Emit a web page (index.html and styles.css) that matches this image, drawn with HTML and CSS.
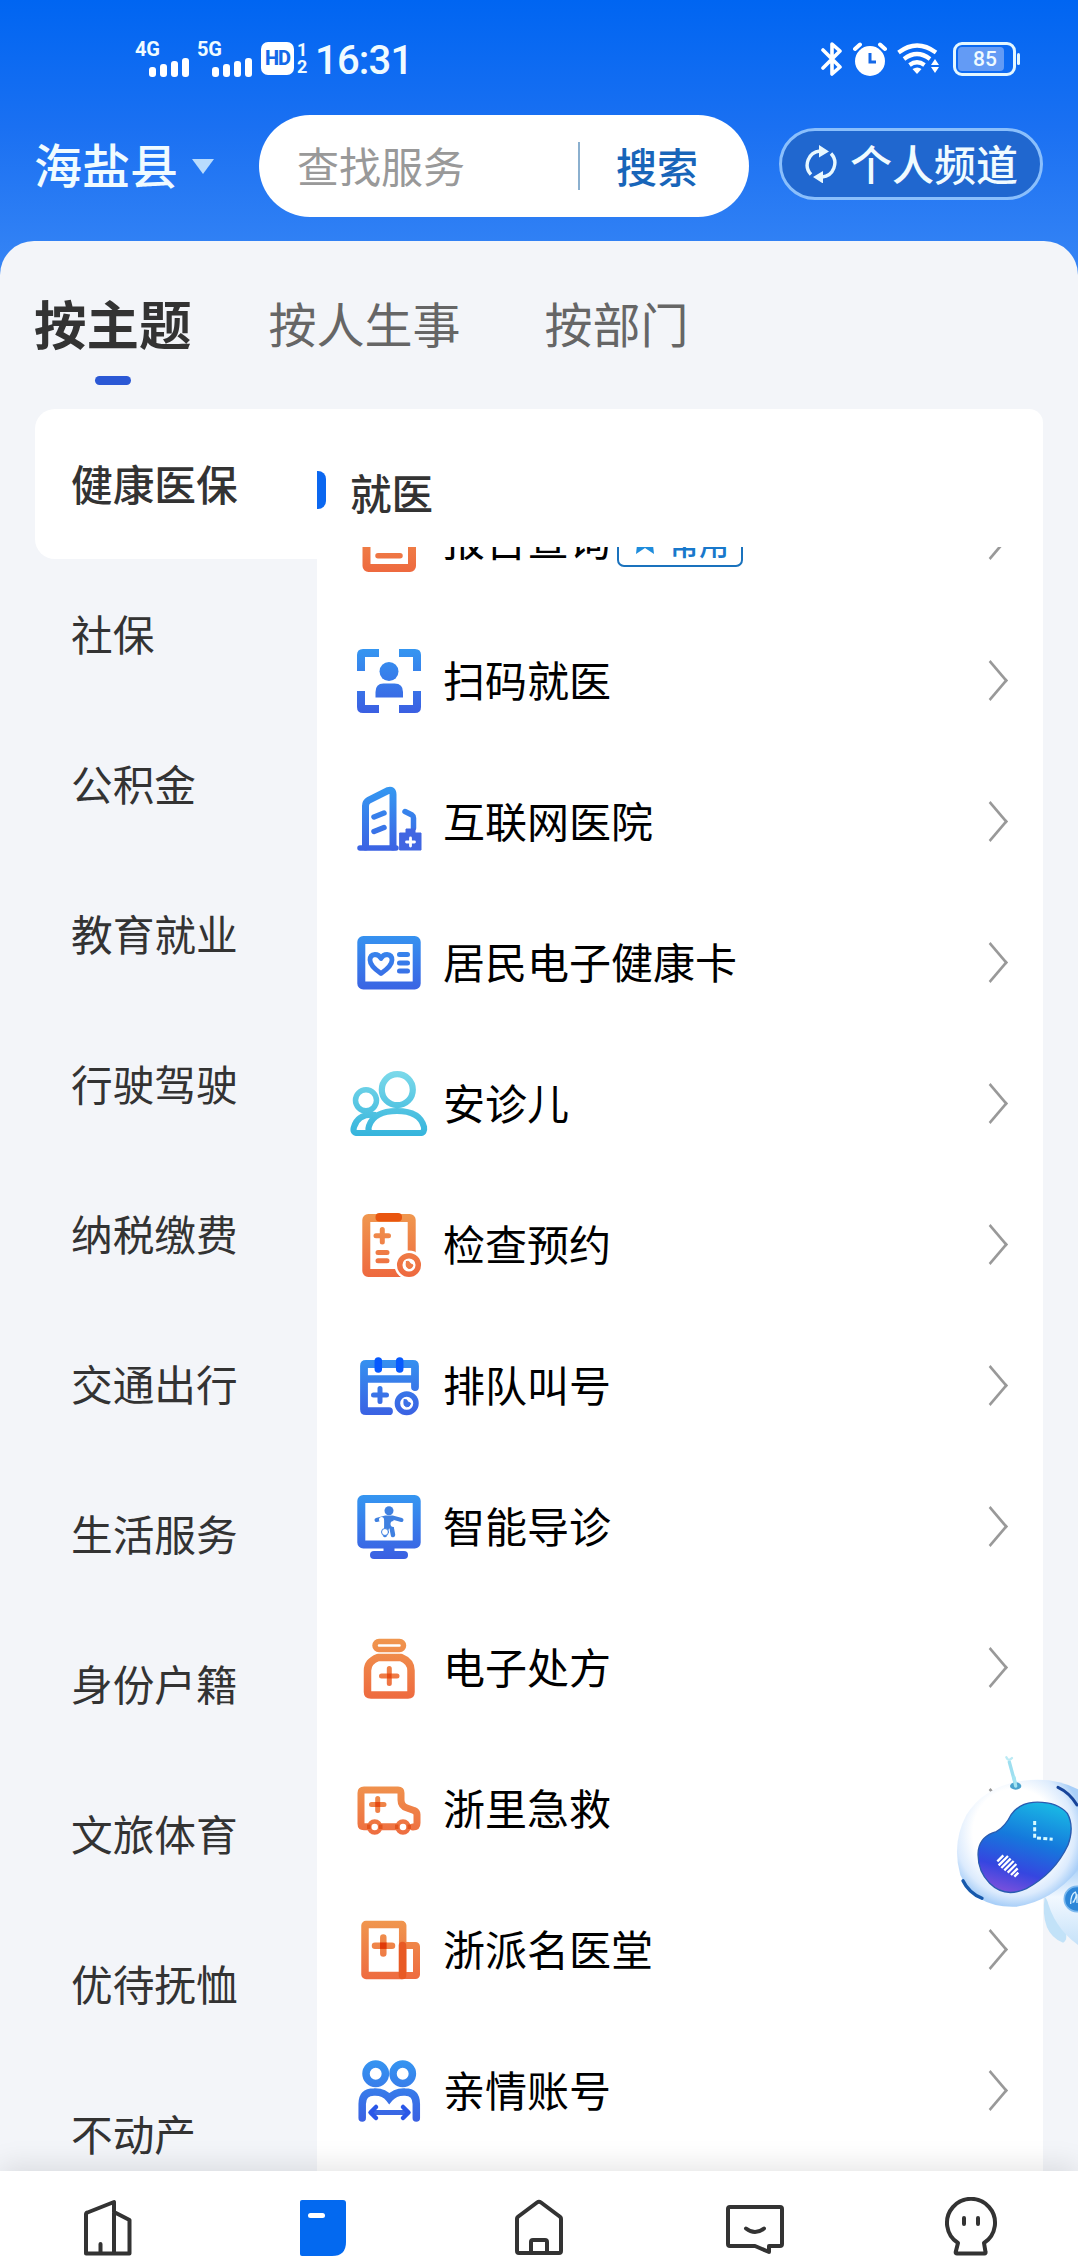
FILE: index.html
```html
<!DOCTYPE html>
<html lang="zh-CN">
<head>
<meta charset="utf-8">
<title>办事服务</title>
<link rel="stylesheet" href="styles.css">
</head>
<body>
<svg class="defs" width="0" height="0" aria-hidden="true">
  <defs>
    <linearGradient id="blue" gradientUnits="userSpaceOnUse" x1="0" y1="8" x2="0" y2="72"><stop offset="0" stop-color="#3596f1"/><stop offset="1" stop-color="#3b5fe2"/></linearGradient>
    <linearGradient id="orange" gradientUnits="userSpaceOnUse" x1="0" y1="8" x2="0" y2="72"><stop offset="0" stop-color="#f0984f"/><stop offset="1" stop-color="#ee693f"/></linearGradient>
    <linearGradient id="cyan" gradientUnits="userSpaceOnUse" x1="0" y1="8" x2="0" y2="72"><stop offset="0" stop-color="#7bd9ea"/><stop offset="1" stop-color="#35b4dc"/></linearGradient>
  </defs>
</svg>
<div class="app">
  <header class="header">
    <div class="status">
      <div class="status-left">
        <div class="signal"><span class="net">4G</span><svg width="40" height="19" viewBox="0 0 40 19"><g fill="#fff"><rect y="9" width="7" height="10" rx="3"/><rect x="11" y="6" width="7" height="13" rx="3"/><rect x="22" y="3" width="7" height="16" rx="3"/><rect x="33" width="7" height="19" rx="3"/></g></svg></div>
        <div class="signal"><span class="net">5G</span><svg width="40" height="19" viewBox="0 0 40 19"><g fill="#fff"><rect y="9" width="7" height="10" rx="3"/><rect x="11" y="6" width="7" height="13" rx="3"/><rect x="22" y="3" width="7" height="16" rx="3"/><rect x="33" width="7" height="19" rx="3"/></g></svg></div>
        <span class="hd">HD</span>
        <span class="sims"><span>1</span><span>2</span></span>
        <span class="clock">16:31</span>
      </div>
      <div class="status-right">
        <svg width="22" height="34" viewBox="0 0 22 34" fill="none" stroke="#fff" stroke-width="3.600" stroke-linejoin="round" stroke-linecap="round"><path d="M2 8l17 17-8 7V2l8 7L2 26"/></svg>
        <svg width="34" height="34" viewBox="0 0 34 34"><circle cx="17" cy="19" r="15" fill="#fff"/><path d="M2 7l5-4.500M32 7l-5-4.500" stroke="#fff" stroke-width="4" stroke-linecap="round"/><path d="M17 11v9h6" stroke="#1468e8" stroke-width="3" fill="none"/></svg>
        <svg width="44" height="32" viewBox="0 0 44 32" fill="none" stroke="#fff" stroke-width="4.200"><path d="M1.500 9.500Q20 -4.500 39 9.500M7 16Q20 6 33 16M12.500 22Q20 16.500 27.500 22"/><path d="M15.500 26q5-3 9 0l-4.500 5z" fill="#fff" stroke="none"/><path d="M34 22l4-6 4 6zM34 24l4 6 4-6z" fill="#fff" stroke="none"/></svg>
        <div class="battery"><span>85</span></div>
      </div>
    </div>
    <div class="topbar">
      <div class="place"><span>海盐县</span><i class="caret"></i></div>
      <div class="search"><span class="placeholder">查找服务</span><i class="divider"></i><span class="go">搜索</span></div>
      <div class="channel">
        <svg width="34" height="38" viewBox="0 0 34 38" fill="none" stroke="#e8f8ff" stroke-width="3.400"><path d="M7 29.500A14 14 0 0 1 16 6M27 8.500A14 14 0 0 1 18 32"/><path d="M15 0l10 6.500-10 6zM19 26l-10 6 10 6.500z" fill="#e8f8ff" stroke="none"/></svg>
        <span>个人频道</span>
      </div>
    </div>
  </header>
  <main class="panel">
    <nav class="tabs"><span class="tab active">按主题</span><span class="tab">按人生事</span><span class="tab">按部门</span></nav>
    <div class="content">
      <ul class="side">
        <li class="on">健康医保</li><li>社保</li><li>公积金</li><li>教育就业</li><li>行驶驾驶</li><li>纳税缴费</li><li>交通出行</li><li>生活服务</li><li>身份户籍</li><li>文旅体育</li><li>优待抚恤</li><li>不动产</li>
      </ul>
      <section class="services">
        <h2>就医</h2>
        <div class="scroll">
          <ul class="list">
            <li><svg class="ico" viewBox="0 0 80 80" fill="none" stroke="url(#orange)" stroke-linecap="round"><rect x="17.500" y="12" width="45.500" height="56" rx="2" stroke-width="8"/><path d="M29 55.700h22M29 40h22" stroke-width="5.500"/></svg><span>报告查询</span><em class="tag"><svg width="22" height="25" viewBox="0 0 22 25"><path d="M11 0l4 8 7 1-3 7 1 9-9-6-9 6 1-9-3-7 7-1z" fill="#1e8cdc"/></svg>常用</em></li>
            <li><svg class="ico" viewBox="0 0 80 80"><path d="M12 30V14q0-2 2-2H30M50 12H66q2 0 2 2V30M68 50V66q0 2-2 2H50M30 68H14q-2 0-2-2V50" fill="none" stroke="url(#blue)" stroke-width="8"/><circle cx="40" cy="30.500" r="9.500" fill="url(#blue)"/><path d="M26.500 56.500V51q0-8.500 8-8.500h11q8.500 0 8.500 8.500v5.500z" fill="url(#blue)"/></svg><span>扫码就医</span></li>
            <li><svg class="ico" viewBox="0 0 80 80" fill="none" stroke="url(#blue)" stroke-linecap="round"><path d="M16.500 65V24q0-4 3.500-6L39 8.500q5-1.500 5 4V65" stroke-width="7"/><path d="M11 66H47" stroke-width="5.500"/><path d="M25 35l10-4M25 49.500l10-4" stroke-width="5.500"/><path d="M56 29.500l7 3.500q1.500 1 1.500 3V46" stroke-width="5.500" stroke-linejoin="round"/><path d="M51 51h6v-4h9v4h6v17H51z" fill="#4166e2" stroke="#4166e2" stroke-width="1"/><path d="M61.500 56v8M57.500 60h8" stroke="#fff" stroke-width="2.800"/></svg><span>互联网医院</span></li>
            <li><svg class="ico" viewBox="0 0 80 80" fill="none" stroke="url(#blue)" stroke-linecap="round"><rect x="12.300" y="17" width="55.400" height="45.500" rx="2" stroke-width="8"/><path d="M32 50.500Q21 43 21 37q0-5 5-5.500 4 0 6 4 2-4 6-4 5 .5 5 5.500 0 6-11 13.500z" stroke-width="4.800" stroke-linejoin="round"/><path d="M50.500 31.500h8M50.500 40h8M50.500 48h8" stroke-width="5"/></svg><span>居民电子健康卡</span></li>
            <li><svg class="ico" viewBox="0 0 80 80" fill="none" stroke="url(#cyan)"><circle cx="48.300" cy="25.700" r="15.500" stroke-width="6.200"/><circle cx="17" cy="36.300" r="10.500" stroke-width="5.500"/><path d="M24 69Q18 69 20 62Q25 47 48 47Q71 47 75 63Q76 69 71 69z" stroke-width="6.200"/><path d="M27 51Q9 49 5 63Q3 69 9 69H24" stroke-width="6.200"/></svg><span>安诊儿</span></li>
            <li><svg class="ico" viewBox="0 0 80 80" fill="none" stroke="url(#orange)" stroke-linecap="round"><rect x="17.300" y="13" width="45.400" height="55" rx="2" stroke-width="8"/><rect x="26.500" y="8" width="26.500" height="8.500" rx="4" fill="#e9550f" stroke="none"/><path d="M33.300 24.500v12.500M27 30.700h12.500M29 47.500h9M29 55.700h9" stroke-width="5"/><circle cx="60" cy="60" r="14.500" fill="#fff" stroke="none"/><circle cx="60" cy="60" r="9.300" stroke-width="5.500"/><path d="M57.500 56.500q3-1 3.500 2l3 1.500q-1 4-4 3.500-4-1-2.500-7z" fill="#ee8048" stroke-width="1"/></svg><span>检查预约</span></li>
            <li><svg class="ico" viewBox="0 0 80 80" fill="none" stroke="url(#blue)" stroke-linecap="round"><path d="M40 65.200H17q-2 0-2-2V20q0-2 2-2H64q2 0 2 2V41" stroke-width="7.800"/><path d="M16 33H65" stroke-width="7.500"/><path d="M29.300 15v8M50.700 15v8" stroke="#075aff" stroke-width="7.500"/><path d="M31 42.500V55.500M24.500 49h13" stroke-width="5"/><circle cx="57.700" cy="57.300" r="14" fill="#fff" stroke="none"/><circle cx="57.700" cy="57.300" r="9.300" stroke-width="5.500"/><path d="M55.200 53.800q3-1 3.500 2l3 1.500q-1 4-4 3.500-4-1-2.500-7z" fill="#3c72e6" stroke-width="1"/></svg><span>排队叫号</span></li>
            <li><svg class="ico" viewBox="0 0 80 80" fill="none" stroke="url(#blue)" stroke-linecap="round"><rect x="12.300" y="12" width="55.400" height="45.500" rx="2" stroke-width="8"/><path d="M40 60v7" stroke-width="11" stroke-linecap="butt"/><path d="M25 68H55" stroke-width="8"/><g fill="#3f80e0" stroke="#3f80e0"><circle cx="40" cy="23.700" r="4.500" stroke="none"/><path d="M27.500 33l9-2.500h7l9 2.500" stroke-width="4" fill="none"/><path d="M36 31h8v10h-8z"/><path d="M38 40l-2 8M42.500 40l1.500 8" stroke-width="4.500"/></g><circle cx="32.500" cy="32.500" r="2.500" fill="#fff" stroke="none"/><circle cx="44.500" cy="37" r="3" fill="#fff" stroke="none"/><circle cx="36" cy="45" r="3.500" fill="#fff" stroke="#3f80e0" stroke-width="1"/></svg><span>智能导诊</span></li>
            <li><svg class="ico" viewBox="0 0 80 80" fill="none" stroke="url(#orange)" stroke-linecap="round" stroke-linejoin="round"><rect x="26" y="13.500" width="28.500" height="8" rx="4" stroke-width="5.500"/><path d="M29 29.500H52q10 4 10 13V64q0 3-3 3H22q-3.500 0-3.500-3V42.500q0-9 10.500-13z" stroke-width="7.500"/><path d="M40.300 40.500v15M32.500 48h15.500" stroke-width="5"/><path d="M38 48h4.600" stroke="#e64a12" stroke-width="5" stroke-linecap="butt"/></svg><span>电子处方</span></li>
            <li><svg class="ico" viewBox="0 0 80 80" fill="none" stroke="url(#orange)" stroke-linecap="round" stroke-linejoin="round"><path d="M20 57.800H15q-3 0-3-3V24q0-3 3-3H49q3 0 3 3V31q0 6 6 8l7 2.500q3 1.500 3 4V54q0 4-4 4M33 57.800H47" stroke-width="7"/><circle cx="25.700" cy="58" r="5.500" fill="#fff" stroke-width="4.500"/><circle cx="54" cy="58" r="5.500" fill="#fff" stroke-width="4.500"/><path d="M18 57.800h3.500M30 57.800h3.500M46 57.800h3.500M58.500 57.800h3.500" stroke="#e3541d" stroke-width="4.500" stroke-linecap="butt"/><path d="M28.700 29.500v12M22.500 35.500h12.500" stroke-width="5"/><path d="M26.200 35.500h5" stroke="#e64a12" stroke-width="5" stroke-linecap="butt"/></svg><span>浙里急救</span></li>
            <li><svg class="ico" viewBox="0 0 80 80" fill="none" stroke="url(#orange)" stroke-linecap="round"><rect x="16" y="14.500" width="37.700" height="51" rx="1" stroke-width="7.500"/><rect x="53.500" y="35.500" width="14" height="30" rx="1" stroke-width="7"/><path d="M53.500 35.500V65.500" stroke="#e85a24" stroke-width="7.500"/><path d="M34.300 27.500v16M26 35.700h17" stroke-width="6.500"/><path d="M31 35.700h6.600" stroke="#e03a08" stroke-width="6.500" stroke-linecap="butt"/></svg><span>浙派名医堂</span></li>
            <li><svg class="ico" viewBox="0 0 80 80" fill="none" stroke="url(#blue)" stroke-linecap="round"><circle cx="26.700" cy="22.800" r="9.700" stroke-width="7.500"/><circle cx="53.700" cy="22.800" r="9.700" stroke-width="7.500"/><path d="M13.200 67V53Q13.200 41 25 41Q35 40.500 40.300 47.500Q46 40.500 56 41Q67.300 41 67.300 53V67" stroke-width="7.500"/><path d="M24 61.500H57" stroke-width="5"/><path d="M27 56l-5.500 5.500 5.500 5.500M54 56l5.500 5.500-5.500 5.500" stroke="#2a57e8" stroke-width="4.500" stroke-linejoin="round"/></svg><span>亲情账号</span></li>
          </ul>
        </div>
      </section>
    </div>
  </main>
  <nav class="bottom">
    <a><svg width="60" height="62" viewBox="0 0 60 62"><path d="M8 56.500V17.500q0-1.500 1.500-2L36 5V56.500M36 15l15.500 8V56.500H8M22.500 47v9" class="ln"/></svg></a>
    <a><svg width="60" height="62" viewBox="0 0 60 62"><path d="M9 3H50q3 0 3 3V45Q53 59 39 59H9q-2 0-2-2V5q0-2 2-2z" fill="#0369f0"/><rect x="15" y="16" width="17" height="5" rx="2.500" fill="#fff"/></svg></a>
    <a><svg width="60" height="62" viewBox="0 0 60 62"><path d="M8 54V22q0-2 2-3L28 5.500q2-1.500 4 0L50 19q2 1 2 3V54q0 2-2 2H10q-2 0-2-2zM22 56V45q0-2 2-2H36q2 0 2 2V56" class="ln"/></svg></a>
    <a><svg width="60" height="62" viewBox="0 0 60 62"><path d="M5 10H55q2 0 2 2V47q0 2-2 2H44v6L30 49H5q-2 0-2-2V12q0-2 2-2zM21 31.500q9 7 18 0" class="ln"/></svg></a>
    <a><svg width="60" height="62" viewBox="0 0 60 62"><path d="M18 46A24 24 0 1 1 44 46L45.500 55q.3 1.500-1 1.500H17q-1.500 0-1.300-1.500z" class="ln"/><path d="M24 21v6M38 21v6" class="ln"/></svg></a>
  </nav>
  <svg class="robot" viewBox="0 0 450 660">
    <defs>
      <radialGradient id="shell" cx=".48" cy=".42" r=".58"><stop offset=".6" stop-color="#fff"/><stop offset=".85" stop-color="#dcebfd"/><stop offset="1" stop-color="#a9cff8"/></radialGradient>
      <linearGradient id="face" x1=".6" y1="0" x2=".3" y2="1"><stop offset="0" stop-color="#19b4e4"/><stop offset=".4" stop-color="#1579dc"/><stop offset=".75" stop-color="#3546e0"/><stop offset="1" stop-color="#7b50dc"/></linearGradient>
      <linearGradient id="torso" x1="0" y1="0" x2="0" y2="1"><stop offset="0" stop-color="#a4cef7"/><stop offset=".4" stop-color="#f2f8ff"/><stop offset="1" stop-color="#c6e2f9"/></linearGradient>
    </defs>
    <path d="M350 470Q335 580 405 608Q425 600 405 550z" fill="#c2e2f8"/>
    <path d="M450 375Q410 400 355 470Q375 560 450 615z" fill="url(#torso)"/>
    <circle cx="447" cy="477" r="38" fill="#2c86d8" stroke="#7bb8ee" stroke-width="5"/>
    <path d="M428 492q0-30 14-36 8 14-8 32M437 487l10-24v26" fill="none" stroke="#d5efff" stroke-width="4"/>
    <path d="M244 66l18 66" stroke="#9edff0" stroke-width="10" stroke-linecap="round"/><path d="M235 52q6 14 17 2" fill="none" stroke="#bcebf5" stroke-width="7" stroke-linecap="round"/>
    <path d="M450 148Q380 110 285 122Q170 138 115 225Q70 310 97 405Q140 505 265 500Q370 485 450 390z" fill="url(#shell)"/>
    <ellipse cx="263" cy="138" rx="17" ry="11" fill="#4aa3ce"/><path d="M258 112l5 26" stroke="#a4e5f2" stroke-width="10" stroke-linecap="round"/>
    <path d="M250 223Q275 190 315 187Q385 183 418 220Q440 260 420 315Q380 400 295 446Q230 475 185 430Q145 390 151 330Q158 288 205 275Q232 260 250 223z" fill="url(#face)" stroke="#295bb0" stroke-width="4"/>
    <path d="M320 243V293L374 298" fill="none" stroke="#d7fbff" stroke-width="9" stroke-dasharray="12 7"/>
    <g stroke="#fff" stroke-width="7"><path d="M208 364l18-18M212 376l28-28M220 384l28-28M229 391l28-28M239 398l26-26M249 405l20-20M259 410l12-12"/></g>
    <path d="M390 142Q425 158 447 195" fill="none" stroke="#17449a" stroke-width="9" stroke-linecap="round"/><path d="M105 422Q122 458 162 475" fill="none" stroke="#1759ac" stroke-width="10" stroke-linecap="round"/>
  </svg>
</div>
</body>
</html>
```
FILE: styles.css
```css
* { box-sizing: border-box; }
body { margin: 0; font-family: "Noto Sans CJK SC", sans-serif; }
ul { list-style: none; margin: 0; padding: 0; }
svg { display: block; flex: none; }
.defs { position: absolute; }
.app { position: relative; width: 1078px; height: 2261px; overflow: hidden; display: flex; flex-direction: column; background: #f3f5f9; }

.header { height: 281px; flex: none; background: linear-gradient(#0065f2, #1a70f2 45%, #3886f5); color: #f0fbff; }
.status { height: 115px; padding: 40px 59px 0 135px; display: flex; justify-content: space-between; align-items: flex-start; }
.status-left, .status-right { display: flex; height: 36px; }
.signal { width: 62px; height: 35px; display: flex; flex-direction: column; justify-content: space-between; }
.signal svg { margin-left: 14px; }
.signal + .signal { width: 64px; }
.signal + .signal svg { margin-left: 15px; }
.net { font: 700 20px/18px Roboto, sans-serif; letter-spacing: -.3px; }
.hd { width: 33px; height: 33px; margin-top: 2px; border-radius: 7px; background: #fff; color: #1468e8; font: 800 20px/33px Roboto, sans-serif; text-align: center; letter-spacing: -1px; }
.sims { width: 23px; padding: 1px 0 0 3px; display: flex; flex-direction: column; font: 700 18px/17px Roboto, sans-serif; }
.clock { margin-left: -2px; font: 500 40px/41px Roboto, sans-serif; letter-spacing: -.8px; }
.status-right { align-items: center; gap: 10px; margin: 1px 3px 0 0; }
.battery { position: relative; width: 63px; height: 34px; margin-left: 2px; border: 3px solid #e4f7ff; border-radius: 9px; padding: 2px; font: 500 21px/24px Roboto, sans-serif; }
.battery span { display: block; width: 46px; padding-left: 8px; border-radius: 4px; background: #639bf5; text-align: center; }
.battery::after { content: ""; position: absolute; right: -7px; top: 8px; width: 3px; height: 12px; background: #e4f7ff; border-radius: 2px; }
.topbar { display: flex; height: 102px; padding: 0 35px; align-items: center; }
.place { width: 224px; display: flex; align-items: center; font-size: 48px; line-height: 60px; font-weight: 500; }
.place span { margin: -6px 0 0 -1px; }
.caret { margin-left: 14px; border: 11px solid transparent; border-top: 15px solid #b8dbfd; border-bottom: 0; }
.search { width: 490px; height: 102px; border-radius: 51px; background: #fff; display: flex; align-items: center; padding-left: 38px; font-size: 42px; line-height: 60px; }
.placeholder { color: #999; width: 281px; margin-top: -3px; }
.divider { width: 2px; height: 48px; background: #8bb0cf; margin-right: 36px; }
.go { color: #1865b9; font-weight: 500; font-size: 41px; margin-top: -2px; }
.channel { width: 264px; height: 72px; margin: -4px 0 0 30px; border: 3px solid #8abffc; border-radius: 36px; background: #2067cf; display: flex; align-items: center; gap: 12px; padding-left: 22px; font-size: 42px; line-height: 60px; font-weight: 500; white-space: nowrap; }
.channel span { margin-top: -2px; }

.panel { position: relative; margin-top: -40px; flex: 1; min-height: 0; background: #f3f5f9; border-radius: 34px 34px 0 0; display: flex; flex-direction: column; }
.tabs { height: 168px; flex: none; padding: 46px 35px 0; display: flex; align-items: flex-start; }
.tab { font-size: 48px; line-height: 70px; color: #666; margin-right: 84px; }
.tab.active { font-size: 52.500px; font-weight: 700; color: #333; margin: 0 77px 0 -1px; display: flex; flex-direction: column; align-items: center; }
.tab.active::after { content: ""; width: 36px; height: 9px; border-radius: 5px; background: #2b58d5; margin-top: 19px; }
.content { flex: 1; min-height: 0; display: flex; margin: 0 35px; overflow: hidden; }
.side { width: 282px; flex: none; }
.side li { height: 150px; padding-left: 36px; font-size: 41.700px; line-height: 149px; color: #333; }
.side .on { background: #fff; border-radius: 20px 0 0 20px; font-weight: 500; }
.services { flex: 1; background: #fff; border-top-right-radius: 14px; display: flex; flex-direction: column; min-height: 0; }
h2 { margin: 62px 0 0; height: 75.500px; flex: none; padding-left: 24px; display: flex; font-size: 41.500px; line-height: 43px; color: #333; font-weight: 500; }
h2::before { content: ""; width: 9px; height: 38px; background: #0b67f0; border-radius: 0 8px 8px 0; margin-left: -24px; margin-right: 24px; }
.scroll { flex: 1; min-height: 0; overflow: hidden; }
.list { margin-top: -77.500px; }
.list li { height: 141px; display: flex; align-items: center; padding: 0 38px 0 32px; font-size: 42px; color: #000; line-height: 60px; }
.list span { margin-top: -4px; }
.list li::after { content: ""; width: 26px; height: 26px; border: solid #999; border-width: 3.500px 3.500px 0 0; transform: scaleX(.85) rotate(45deg); margin-left: auto; }
.ico { width: 80px; height: 80px; margin-right: 14px; }
.tag { height: 50px; margin: 4px 0 0 6px; width: 126px; border: 2px solid #1a72bd; border-radius: 7px; display: flex; align-items: center; gap: 13px; padding-left: 15px; color: #1878cb; font-size: 30px; font-style: normal; font-weight: 500; line-height: 46px; }

.bottom { position: relative; height: 90px; flex: none; background: #fff; display: flex; padding-top: 26px; box-shadow: 0 -6px 26px rgba(0,0,0,.1); }
.bottom a { flex: 1; display: flex; justify-content: center; align-items: flex-start; }
.ln { fill: none; stroke: #333; stroke-width: 4; stroke-linejoin: round; stroke-linecap: round; }
.robot { position: absolute; left: 928px; top: 1740px; width: 150px; height: 220px; }
```
